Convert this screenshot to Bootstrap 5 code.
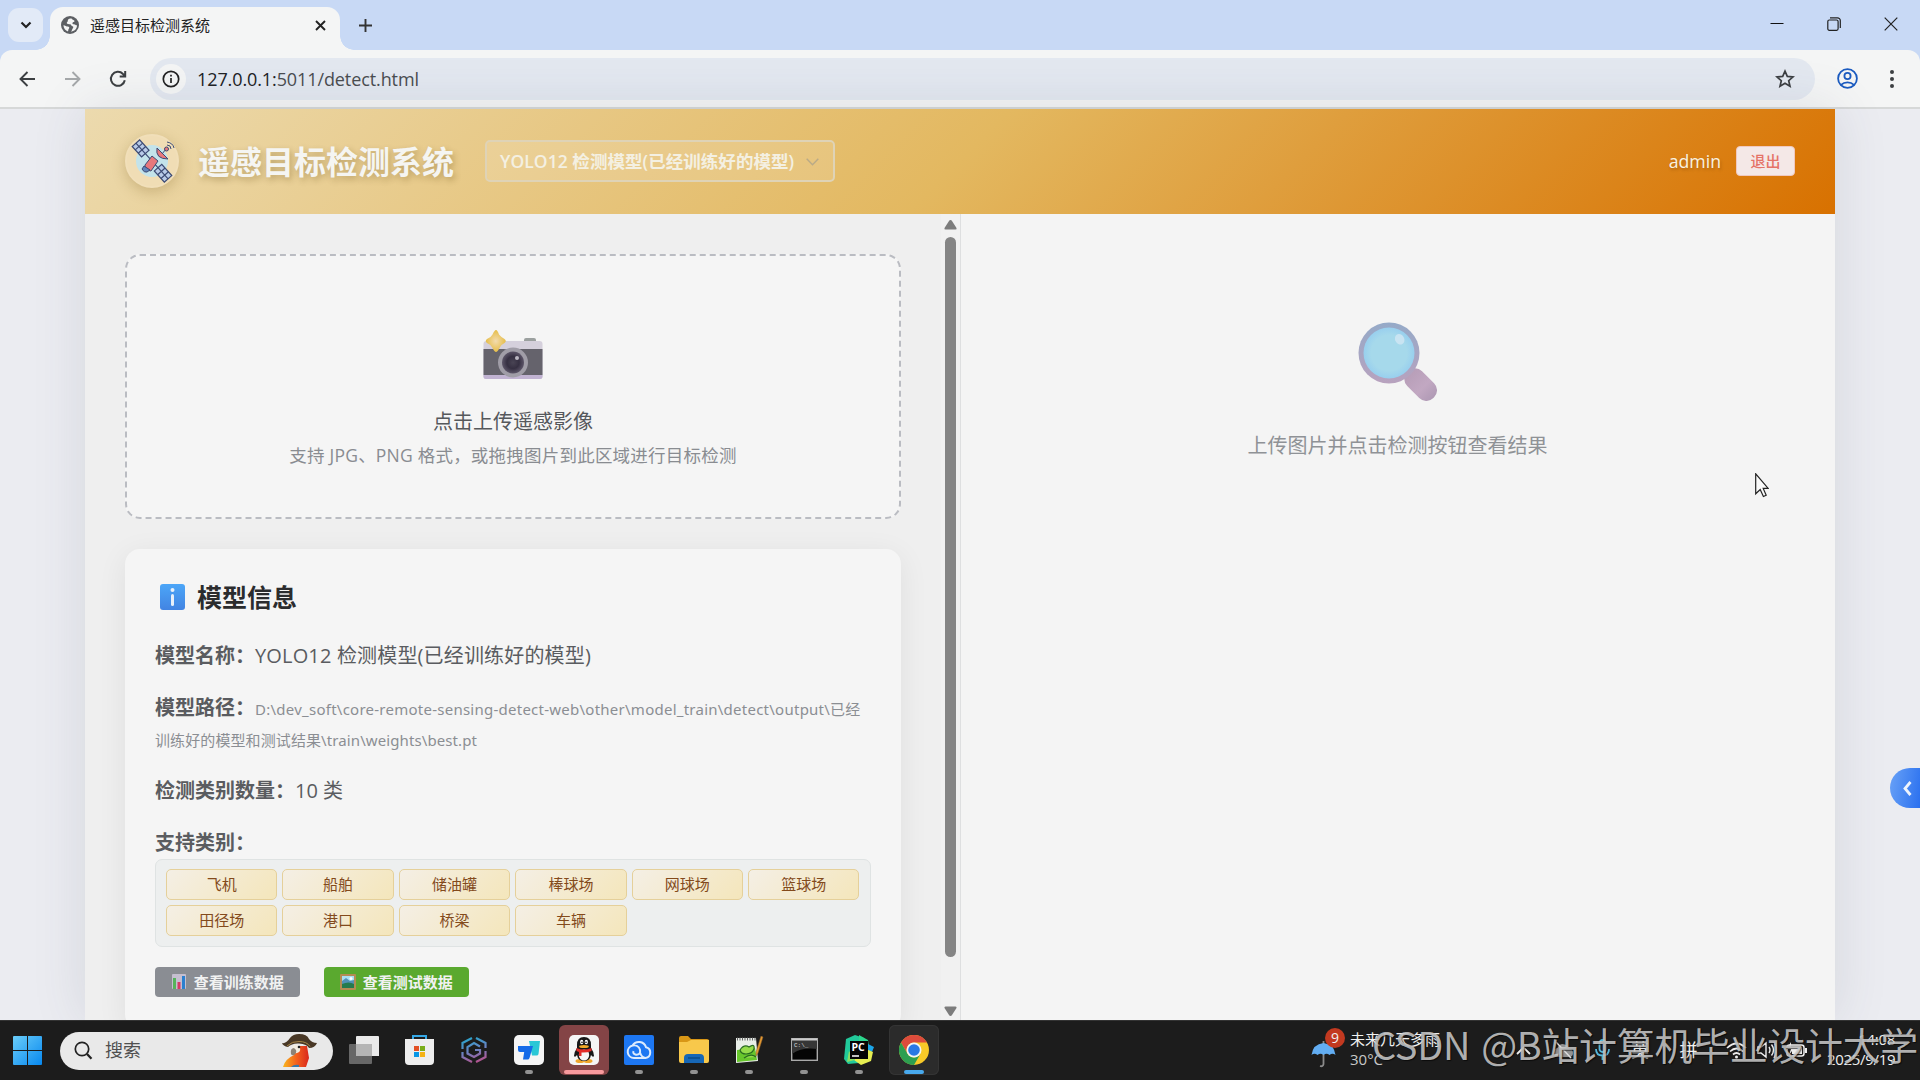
<!DOCTYPE html>
<html lang="zh-CN">
<head>
<meta charset="utf-8">
<title>遥感目标检测系统</title>
<link rel="stylesheet" href="https://cdn.jsdelivr.net/npm/bootstrap@5.3.0/dist/css/bootstrap.min.css">
<style>
body{width:1920px;height:1080px;overflow:hidden;font-family:"Open Sans","Noto Sans CJK SC",sans-serif;background:#ebecf1;color:#222}
svg{display:block;flex:none}
.tabstrip{height:50px;background:#c8d9f5;padding-left:8px}
.tabmenu{width:35px;height:34px;border-radius:11px;background:#e2eaf7;margin-top:8px}
.tabitem{width:290px;height:43px;margin:7px 0 0 7px;background:#f4f5f5;border-radius:13px 13px 0 0;padding:0 13px 0 11px;position:relative;font-size:15px}
.tabitem::before,.tabitem::after{content:"";position:absolute;bottom:0;width:14px;height:14px}
.tabitem::before{left:-14px;background:radial-gradient(circle at 0 0,transparent 13.5px,#f4f5f5 14px)}
.tabitem::after{right:-14px;background:radial-gradient(circle at 100% 0,transparent 13.5px,#f4f5f5 14px)}
.winbtns{gap:43px;padding-right:22px;margin-top:-1px}
.toolwrap{background:#c8d9f5}
.toolrow{height:59px;background:#f4f5f5;border-radius:12px 12px 0 0;border-bottom:2px solid #d6d8d8;padding:0 19px 0 18px}
.omni{height:42px;border-radius:21px;background:#e3e8f0;margin-left:24px;padding:0 20px 0 6px;font-size:18px;color:#4a4d50}
.omni b{font-weight:400;color:#202224}
.urltext{letter-spacing:-.1px;padding-top:2px}
.siteinfo{width:30px;height:30px;border-radius:50%;background:#f4f5f5;margin-right:11px}
.viewport{height:911px;position:relative}
.appbox{width:1750px;height:911px;box-shadow:0 0 50px rgba(60,70,90,.13)}
.apphead{height:105px;padding:0 40px;background:linear-gradient(135deg,#ecdaae 0%,#e3b860 50%,#d87100 100%)}
.applogo{width:54px;height:54px;border-radius:50%;border:2px solid #f1dfb9;background:#f0ddb5;box-shadow:0 4px 14px rgba(120,90,30,.28);margin:-1px 19px 0 0}
.apptitle{font-size:32px;font-weight:700;color:#f5f5f2;text-shadow:2px 3px 6px rgba(90,65,10,.32);line-height:1;margin-right:31px;white-space:nowrap}
.modelsel{width:350px;height:42px;border:2px solid #dfd3b6;border-radius:5px;background:rgba(255,255,255,.13);font-size:17.5px;font-weight:600;color:#f4f0e2;padding:1px 14px 0 13px;white-space:nowrap;margin-top:-1px;letter-spacing:.05px}
.uname{font-size:17.7px;color:#f8f2e2;text-shadow:1px 2px 3px rgba(80,40,0,.3);margin-right:15px}
.quit{width:59px;height:30px;border:1px solid #f0c9c0;border-radius:4px;background:#f4e8e7;color:#e57367;font-size:15px;font-weight:500;margin-top:-1px}
.leftpane{width:875px;height:806px;background:#efefef;padding:40px 0 0 40px;overflow:hidden}
.leftcol{width:776px}
.drop{height:265px;border:2px dashed #babcc2;border-radius:15px;background:#f5f5f5;padding-top:74px;margin-bottom:30px}
.drop-a{font-size:20px;line-height:30px;color:#55585c;margin-top:27px}
.drop-b{font-size:17.5px;line-height:28px;color:#898c91;margin-top:4px;white-space:nowrap;letter-spacing:.22px}
.infocard{height:480px;border-radius:15px;background:#f5f5f5;box-shadow:0 6px 30px rgba(0,0,0,.07);padding:28px 30px}
.infotitle{font-size:25px;font-weight:700;color:#2b2c2e;line-height:40px;padding-left:5px}
.inforow{font-size:20px;line-height:32px;height:32px;color:#5a5c60;white-space:nowrap;margin-bottom:20px}
.inforow strong{color:#5a5c60;font-weight:700}
.modelname{letter-spacing:.16px}
.inforow.tworow{height:63px}
.path{font-family:"Noto Sans","Noto Sans CJK SC",sans-serif;font-size:15px;color:#8b8e93;letter-spacing:.25px}
.path.second{display:block;line-height:32px;margin-top:-1px;letter-spacing:.1px}
.tagbox{height:88px;border:1px solid #dfe3e3;border-radius:7px;background:#edefef;padding:9px 10.5px 9px 10px;display:grid;grid-template-columns:repeat(6,1fr);gap:5px;grid-auto-rows:31px}
.tagitem{border:1px solid #e5d09a;border-radius:5px;background:linear-gradient(135deg,#f4efe5,#f4e6bb);color:#834a1c;font-size:15px}
.actbtn{width:144.5px;height:30px;border-radius:4px;font-size:15px;font-weight:700;color:#f1f2f2;white-space:nowrap;gap:7px}
.grayb{background:#8a8d93}.greenb{background:#5aa92f}
.sbar{width:19px;margin:-40px 0 0 0;height:806px;background:#f1f1f1;padding:6px 0 4px}
.sthumb{width:11px;height:720px;border-radius:6px;background:#858585}
.rightpane{width:875px;height:806px;background:#f4f4f4;border-left:1px solid #dedfe0;padding:108px 1px 0 0}
.emptytxt{font-size:20px;line-height:30px;color:#8f9296;margin-top:30px}
.edgebtn{position:absolute;right:0;top:659px;width:30px;height:40px;border-radius:20px 0 0 20px;padding-left:5px;background:linear-gradient(100deg,#69a2f7,#2a70ef)}
.mouse{position:absolute;left:1755px;top:364px}
.taskbar{height:60px;background:#1c1c1c;position:relative;border-top:1px solid #333;color:#f1f1f1}
.winlogo{width:55px;padding-left:13px}
.searchpill{width:273px;height:38px;border-radius:19px;background:#e9e9e9;color:#505050;font-size:18px;margin-left:5px;padding:0 15px 0 14px}
.slots{margin:-1px 0 0 6px}
.slot{width:50px;height:50px;border-radius:6px;margin-right:5px;position:relative;padding-bottom:1px}
.slot i{position:absolute;bottom:1px;left:21px;width:8px;height:4px;border-radius:2px;background:#929292}
.slot.qq{background:#844446}.slot.qq i{left:5px;width:40px;background:#f79a9d}
.slot.chr{background:#2b2b2b;box-shadow:inset 0 0 0 1px #343434}.slot.chr i{left:15px;width:20px;background:#48a9ed}
.tray{font-size:15px;line-height:20px;width:583px;margin:-4px 25px 0 0}
.weather{position:relative;width:38px;height:40px}
.wbadge{position:absolute;left:13px;top:-1px;width:20px;height:20px;border-radius:50%;background:#c23920;font-size:14px;line-height:20px;text-align:center}
.trayicons{gap:9.5px;margin:3px 19px 0 0}
.ime{font-size:18px;width:20px}
.wm{position:absolute;left:1372px;top:-7px;font-family:"Noto Sans CJK SC",sans-serif;font-size:38px;line-height:60px;color:rgba(205,205,205,.85);white-space:nowrap;text-shadow:1px 1px 1px rgba(0,0,0,.6);word-spacing:3px;letter-spacing:-.35px;font-weight:400}
</style>
<script src="https://cdn.jsdelivr.net/npm/bootstrap@5.3.0/dist/js/bootstrap.bundle.min.js"></script>
</head>
<body>
<header>
 <div class="tabstrip d-flex align-items-start">
  <div class="tabmenu d-flex align-items-center justify-content-center"><svg width="12" height="8" viewBox="0 0 12 8" fill="none" stroke="#222" stroke-width="2.2"><path d="M1.5 1.5 6 6l4.5-4.5"/></svg></div>
  <div class="tabitem d-flex align-items-center">
   <svg width="18" height="18" viewBox="0 0 18 18" style="margin-top:-7px"><circle cx="9" cy="9" r="9" fill="#5c5f63"/><path d="M10.500 2.500C8 2 6.500 3.500 6.800 5c.2 1-1.300 1-1 2.300.3 1.200 2 .7 3.400 1 1.500.4 1 2 2.300 2 1 .2 1 1.400.2 2.200-.8.700-.5 2-1.700 3.200 4-.7 6-3.200 6-6.400-1.200.3-1.700-1-3-1-1 0-1.800-.3-1.500-1.400.3-1 2-.6 2-1.900 0-1-2-1-3-2.500M2.400 9.200c.2 3 2 5.400 4.600 6.200.6-1 0-2 1-2.800.8-.8 0-2-1.200-2-1.400 0-2.600-1.200-4.400-1.400z" fill="#f4f5f5"/></svg>
   <span style="margin:-7px 0 0 11px">遥感目标检测系统</span>
   <svg class="ms-auto" width="13" height="13" viewBox="0 0 13 13" stroke="#222" stroke-width="1.900" style="margin-top:-7px"><path d="m2 2 9 9M11 2l-9 9"/></svg>
  </div>
  <svg width="15" height="15" viewBox="0 0 15 15" stroke="#333" stroke-width="1.900" style="margin:18px 0 0 18px"><path d="M7.500 1v13M1 7.500h13"/></svg>
  <div class="winbtns d-flex align-items-center ms-auto h-100">
   <svg width="14" height="14" viewBox="0 0 14 14"><path d="M.5 6.500h13" stroke="#111"/></svg>
   <svg width="14" height="14" viewBox="0 0 14 14" fill="none" stroke="#222" stroke-width="1.200"><rect x=".8" y="3" width="10.300" height="10.300" rx="1.500"/><path d="M3 .8h7.500a2.800 2.800 0 0 1 2.800 2.800V11"/></svg>
   <svg width="14" height="14" viewBox="0 0 14 14" stroke="#222" stroke-width="1.200"><path d="m.7.7 12.600 12.600M13.300.7.7 13.300"/></svg>
  </div>
 </div>
 <div class="toolwrap">
 <div class="toolrow d-flex align-items-center">
  <svg width="18" height="16" viewBox="0 0 18 16" fill="none" stroke="#3c3f42" stroke-width="1.900"><path d="M17 8H3M9.500 1 2.500 8l7 7"/></svg>
  <svg style="margin-left:28px" width="18" height="16" viewBox="0 0 18 16" fill="none" stroke="#a5a8aa" stroke-width="1.900"><path d="M1 8h14M8.500 1l7 7-7 7"/></svg>
  <svg style="margin-left:27px;margin-right:-1px" width="18" height="18" viewBox="0 0 18 18" fill="none" stroke="#3c3f42" stroke-width="2"><path d="M15.800 10.200A7 7 0 1 1 14 4l2 2M16.200 1v5.500h-5.500"/></svg>
  <div class="omni d-flex align-items-center flex-grow-1">
   <div class="siteinfo d-flex align-items-center justify-content-center"><svg width="18" height="18" viewBox="0 0 18 18" fill="none" stroke="#222" stroke-width="1.700"><circle cx="9" cy="9" r="7.700"/><path d="M9 8v5M9 4.800v1.800"/></svg></div>
   <span class="urltext"><b>127.0.0.1:</b>5011/detect.html</span>
   <svg class="ms-auto" width="20" height="20" viewBox="0 0 20 20" fill="none" stroke="#3c3f42" stroke-width="1.700"><path d="m10 2.200 2.300 5.200 5.700.5-4.300 3.800 1.300 5.600-5-3-5 3 1.300-5.600L2 7.900l5.700-.5z"/></svg>
  </div>
  <svg style="margin-left:22px" width="21" height="21" viewBox="0 0 21 21" fill="none" stroke="#1b5bc0" stroke-width="1.800"><circle cx="10.500" cy="10.500" r="9.400"/><circle cx="10.500" cy="8" r="3.100"/><path d="M4 16.800c3.500-3.300 9.500-3.300 13 0"/></svg>
  <svg style="margin:0 6px 0 31px" width="6" height="20" viewBox="0 0 6 20" fill="#3c3f42"><circle cx="3" cy="3" r="2"/><circle cx="3" cy="10" r="2"/><circle cx="3" cy="17" r="2"/></svg>
 </div></div>
</header>
<main class="viewport d-flex justify-content-center">
 <div class="appbox">
  <div class="apphead d-flex align-items-center">
   <div class="applogo d-flex align-items-center justify-content-center">
    <svg width="50" height="50" viewBox="0 0 50 50"><circle cx="25" cy="25" r="16" fill="#c3e3ea"/><g transform="rotate(-42 25 25)" stroke="#3d4b74" stroke-width="1.200"><path d="M25 8v35" /><rect x="20" y="1" width="10" height="14" fill="#b8cbe8"/><path d="M20 5.500h10M20 10h10M25 1v14"/><rect x="20" y="34" width="10" height="15" fill="#b8cbe8"/><path d="M20 39h10M20 44h10M25 34v15"/></g><path d="m18 29 7-9 6 5-7 10q-7-1-6-6z" fill="#e8787b" stroke="#3d4b74"/><path d="M30 12q-2 11 11 11z" fill="#e8787b" stroke="#3d4b74"/><path d="m35 18 4-5" stroke="#3d4b74"/><circle cx="39.500" cy="13" r="2" fill="#e8787b" stroke="#3d4b74"/><path d="M40 9q4 0 4 4M40 6q6 1 7 6" fill="none" stroke="#3d4b74"/><path d="m17 30-2 3q2 4 5 3l3-2z" fill="#6285ba" stroke="#3d4b74"/></svg>
   </div>
   <div class="apptitle">遥感目标检测系统</div>
   <div class="modelsel d-flex align-items-center justify-content-between"><span>YOLO12 检测模型(已经训练好的模型)</span><svg width="13" height="8" viewBox="0 0 13 8" fill="none" stroke="#b9aa88" stroke-width="1.400"><path d="m.7.8 5.800 6 5.800-6"/></svg></div>
   <div class="uname ms-auto">admin</div>
   <div class="quit d-flex align-items-center justify-content-center">退出</div>
  </div>
  <div class="d-flex">
   <section class="leftpane d-flex justify-content-between">
    <div class="leftcol">
     <div class="drop d-flex flex-column align-items-center">
      <svg width="60" height="50" viewBox="0 0 60 50"><defs><radialGradient id="lens"><stop offset="0" stop-color="#494454"/><stop offset=".55" stop-color="#363042"/><stop offset="1" stop-color="#5c5568"/></radialGradient><radialGradient id="spark"><stop offset="0" stop-color="#f3dcb0"/><stop offset="1" stop-color="#e6bd48"/></radialGradient></defs><rect x="41" y="8" width="12" height="5" rx="2" fill="#9ba09f"/><rect x=".5" y="11" width="59" height="38" rx="3" fill="#d5d0dc"/><path d="M.5 19h59v26H.5z" fill="#65636c"/><path d="M.5 45h59v1.500a2.500 2.500 0 0 1-2.500 2.500H3a2.500 2.500 0 0 1-2.500-2.500z" fill="#c1b3d2"/><circle cx="30" cy="32.500" r="15" fill="#a09da7"/><circle cx="30" cy="32.500" r="11" fill="url(#lens)"/><circle cx="34" cy="28" r="2" fill="#bbb7c2"/><path d="M13 0q1.500 0 3 4.500Q18 7 21.500 9q2.500 2 0 4-3.500 1.500-5 5-2 4-3.500 4t-3.500-4Q8 14.500 4 13q-2.500-2 0-4 4-1.500 5.500-4.500Q11.500 0 13 0" fill="url(#spark)"/></svg>
      <div class="drop-a">点击上传遥感影像</div>
      <div class="drop-b">支持 JPG、PNG 格式，或拖拽图片到此区域进行目标检测</div>
     </div>
     <div class="infocard">
      <div class="infotitle d-flex align-items-center"><svg width="25" height="26" viewBox="0 0 25 26"><defs><linearGradient id="ib" x2="0" y2="1"><stop stop-color="#4ca6f8"/><stop offset="1" stop-color="#4284e2"/></linearGradient></defs><rect width="25" height="26" rx="3" fill="url(#ib)"/><circle cx="12.500" cy="6" r="2" fill="#e8f0fa"/><rect x="11" y="10" width="3" height="12" rx="1.500" fill="#e8f0fa"/></svg><span style="margin-left:12px">模型信息</span></div>
      <div class="inforow" style="margin-top:23px"><strong>模型名称：</strong><span class="modelname">YOLO12 检测模型(已经训练好的模型)</span></div>
      <div class="inforow tworow"><strong>模型路径：</strong><span class="path">D:\dev_soft\core-remote-sensing-detect-web\other\model_train\detect\output\已经</span><span class="path second">训练好的模型和测试结果\train\weights\best.pt</span></div>
      <div class="inforow"><strong>检测类别数量：</strong>10 类</div>
      <div class="inforow mb-0"><strong>支持类别：</strong></div>
      <div class="tagbox">
       <div class="tagitem d-flex align-items-center justify-content-center">飞机</div><div class="tagitem d-flex align-items-center justify-content-center">船舶</div><div class="tagitem d-flex align-items-center justify-content-center">储油罐</div><div class="tagitem d-flex align-items-center justify-content-center">棒球场</div><div class="tagitem d-flex align-items-center justify-content-center">网球场</div><div class="tagitem d-flex align-items-center justify-content-center">篮球场</div><div class="tagitem d-flex align-items-center justify-content-center">田径场</div><div class="tagitem d-flex align-items-center justify-content-center">港口</div><div class="tagitem d-flex align-items-center justify-content-center">桥梁</div><div class="tagitem d-flex align-items-center justify-content-center">车辆</div>
      </div>
      <div class="d-flex" style="margin-top:20px;gap:24.500px">
       <div class="actbtn grayb d-flex align-items-center justify-content-center"><svg width="16" height="16" viewBox="0 0 16 16"><rect x="1" width="14" height="15" rx="1" fill="#c5bfd0"/><path d="M2 4h3v11H2z" fill="#55b45b"/><path d="M6.500 8h3v7h-3z" fill="#d63a66"/><path d="M11 2h3v13h-3z" fill="#2b80cf"/></svg>查看训练数据</div>
       <div class="actbtn greenb d-flex align-items-center justify-content-center"><svg width="16" height="16" viewBox="0 0 16 16"><rect width="16" height="16" rx="1" fill="#b48b53"/><path d="M2 2h12v12H2z" fill="#a8dff2"/><path d="m2 7 4-3 4 3 4-1v8H2z" fill="#5292b8"/><path d="M2 10q7-3 12 0v4H2z" fill="#247b4e"/><circle cx="11" cy="4.500" r="1.500" fill="#fff"/></svg>查看测试数据</div>
      </div>
     </div>
    </div>
    <div class="sbar d-flex flex-column align-items-center">
     <svg width="13" height="10" viewBox="0 0 13 10"><path d="M6.500 0q1 0 1.500 1l4.500 7q.5 1.500-1 1.500h-10Q0 9.500.5 8L5 1q.5-1 1.500-1" fill="#7c7c7c"/></svg>
     <div class="sthumb" style="margin-top:7px"></div>
     <svg class="mt-auto" width="13" height="10" viewBox="0 0 13 10"><path d="M6.500 10q-1 0-1.500-1L.5 2Q0 .5 1.500.5h10q1.500 0 1 1.500L8 9q-.5 1-1.500 1" fill="#7c7c7c"/></svg>
    </div>
   </section>
   <section class="rightpane d-flex flex-column align-items-center">
    <svg width="79" height="79" viewBox="0 0 79 79"><defs><linearGradient id="rim" x2="0" y2="1"><stop stop-color="#95aac8"/><stop offset="1" stop-color="#b8a2be"/></linearGradient><radialGradient id="gl"><stop offset=".7" stop-color="#a6d9eb"/><stop offset="1" stop-color="#98cfee"/></radialGradient><linearGradient id="hd"><stop stop-color="#b69db7"/><stop offset=".6" stop-color="#c2a8c2"/><stop offset="1" stop-color="#b09ab5"/></linearGradient></defs><rect x="44" y="52.500" width="37" height="21" rx="10" transform="rotate(45 63 63)" fill="url(#hd)"/><circle cx="31" cy="31" r="30.500" fill="url(#rim)"/><circle cx="31" cy="31" r="25.500" fill="url(#gl)"/><ellipse cx="41.500" cy="17.500" rx="4.500" ry="5.500" fill="#c9e4f2" transform="rotate(-30 41 17)"/></svg>
    <div class="emptytxt">上传图片并点击检测按钮查看结果</div>
   </section>
  </div>
 </div>
 <div class="edgebtn d-flex align-items-center justify-content-center"><svg width="9" height="15" viewBox="0 0 9 15" fill="none" stroke="#eef4fc" stroke-width="2.800"><path d="M7.500 1 2 7.500 7.500 14"/></svg></div>
 <svg class="mouse" width="14" height="25" viewBox="0 0 14 25"><path d="M.7.8v20l4.500-4.300 3.200 7 2.800-1.300-3-6.800h5z" fill="#fafafa" stroke="#222" stroke-width="1.200"/></svg>
</main>
<footer class="taskbar d-flex align-items-center">
 <div class="winlogo"><svg width="29" height="29" viewBox="0 0 29 29"><defs><linearGradient id="wl" x2="1" y2="1"><stop stop-color="#6acdf9"/><stop offset="1" stop-color="#0788ef"/></linearGradient></defs><path d="M0 1q0-1 1-1h13v14H0zM15 0h13q1 0 1 1v13H15zM0 15h14v14H1q-1 0-1-1zM15 15h14v13q0 1-1 1H15z" fill="url(#wl)"/></svg></div>
 <div class="searchpill d-flex align-items-center">
  <svg width="19" height="19" viewBox="0 0 19 19" fill="none" stroke="#222"><circle cx="8" cy="8" r="6.700" stroke-width="1.700"/><path d="m13 13 4.500 4.800" stroke-width="2.300"/></svg><span style="margin-left:12px">搜索</span>
  <svg class="ms-auto" width="36" height="34" viewBox="0 0 36 34"><defs><linearGradient id="pb"><stop stop-color="#f8b61d"/><stop offset=".5" stop-color="#f4631d"/><stop offset="1" stop-color="#d9261b"/></linearGradient></defs><path d="M1 33q2-8 11-12l1-9h12l2 12-3 9z" fill="url(#pb)"/><path d="M9 33q3-3 8-2v2z" fill="#3977a8"/><path d="M11 11q6-1 7 3t-3 5-5-4z" fill="#f3ede0"/><path d="M12 14q-4 0-3 6 1 2 3 1 3-2 2-5z" fill="#8d8377"/><circle cx="17" cy="13" r="1.300" fill="#222"/><path d="M0 9q4 1 8-5 3-4 9-4 8 0 10 5 3 4 8 4-2 5-8 5-2-4-10-4.500-7-.5-11 3.500-5-1-6-4" fill="#493826"/><path d="M5 12q5-5 12-4.500 8 0 11 5" fill="none" stroke="#a78648"/></svg>
 </div>
 <div class="slots d-flex align-items-center">
  <div class="slot d-flex align-items-center justify-content-center"><svg width="30" height="28" viewBox="0 0 30 28"><path d="M7 1q0-1 1-1h21q1 0 1 1v19H7z" fill="#eaeaea"/><rect y="8" width="23" height="20" rx="1" fill="#777" opacity=".82"/><path d="M7 8h16v12H7z" fill="#b5b5b5"/></svg></div>
  <div class="slot d-flex align-items-center justify-content-center"><svg width="29" height="30" viewBox="0 0 29 30"><path d="M8 6V1h13v5" fill="none" stroke="#35a8e6" stroke-width="2"/><path d="M0 4h29v22q0 4-4 4H4q-4 0-4-4z" fill="#ededed"/><path d="M9 11h5v5H9z" fill="#e35025"/><path d="M15 11h5v5h-5z" fill="#79ad19"/><path d="M9 17h5v5H9z" fill="#0796e6"/><path d="M15 17h5v5h-5z" fill="#f5b214"/></svg></div>
  <div class="slot d-flex align-items-center justify-content-center"><svg width="26" height="28" viewBox="0 0 26 28" fill="none" stroke="url(#gg)" stroke-width="2.200"><defs><linearGradient id="gg" gradientUnits="userSpaceOnUse" x1="8" x2="16" y1="0" y2="28"><stop stop-color="#22a7cc"/><stop offset=".5" stop-color="#6884c4"/><stop offset="1" stop-color="#bd4c87"/></linearGradient></defs><path d="M11 2 1.500 7v6M15 2l9.500 5v5M1.500 16v5l9.500 5M24.500 15v6L15 26M19 10.500 13 7l-6.500 4v6.500L13 21l6-3.500V14h-5"/></svg></div>
  <div class="slot d-flex align-items-center justify-content-center"><svg width="30" height="30" viewBox="0 0 30 30"><rect width="30" height="30" rx="5" fill="#f5f5f5"/><path d="M15 6h11l-1.500 13q-.2 1.500-2 1.500H18z" fill="#29c7d6"/><path d="M4 11h15l-3.500 12q-.5 1.500-2 1.500H9l1.200-7.500H6q-2 0-2-2z" fill="#156be8"/></svg><i></i></div>
  <div class="slot qq d-flex align-items-center justify-content-center"><svg width="30" height="30" viewBox="0 0 30 30"><rect width="30" height="30" rx="5" fill="#f5f5f5"/><ellipse cx="11" cy="26" rx="4.500" ry="2" fill="#efa62c"/><ellipse cx="19" cy="26" rx="4.500" ry="2" fill="#efa62c"/><path d="M8 10q0-8 7-8t7 8v3q3 4 3 8-1 2-3-1-1 6-7 6t-7-6q-2 3-3 1 0-4 3-8z" fill="#171717"/><ellipse cx="15" cy="20" rx="5.200" ry="5.500" fill="#f5f5f5"/><path d="M7.500 13q7 3 15 0v3q-5 2-10 1.500V21H10v-4l-2.500-1z" fill="#e22c28"/><ellipse cx="12.700" cy="7" rx="1.600" ry="2.300" fill="#fff"/><ellipse cx="17.300" cy="7" rx="1.600" ry="2.300" fill="#fff"/><circle cx="13" cy="7.300" r=".8"/><circle cx="17" cy="7.300" r=".8"/><ellipse cx="15" cy="11.500" rx="4.800" ry="1.500" fill="#f0aa28"/></svg><i></i></div>
  <div class="slot d-flex align-items-center justify-content-center"><svg width="30" height="30" viewBox="0 0 30 30"><rect width="30" height="30" rx="2" fill="#1d77f2"/><path d="M8.500 10.500A7.500 7.500 0 0 1 22 12.200a5.500 5.500 0 0 1-.5 10.800H10a6.300 6.300 0 1 1 6-8.300M16 14.700q1 5.300-4 5-3.500-.8-2.500-3.500M16 17.500q1.500 5 5.500 5.500" fill="none" stroke="#dcebfd" stroke-width="2"/></svg><i></i></div>
  <div class="slot d-flex align-items-center justify-content-center"><svg width="30" height="27" viewBox="0 0 30 27"><path d="M0 2q0-2 2-2h7l3 3h16q2 0 2 2v4H0z" fill="#d99716"/><path d="M0 6h8l4-2h18v21q0 2-2 2H2q-2 0-2-2z" fill="#f8c84b"/><path d="M5 27v-5q0-4 4-4h12q4 0 4 4v5z" fill="#1767b6"/><path d="M9 22h12" stroke="#0b4b88" stroke-width="1.500"/></svg><i></i></div>
  <div class="slot d-flex align-items-center justify-content-center"><svg width="29" height="28" viewBox="0 0 29 28"><path d="M1 2h20l2 23-22 2z" fill="#e9eee8"/><path d="M2 3h19" stroke="#666" stroke-width="3" stroke-dasharray="1 1.500"/><path d="m2 14 18-2 2 12-20 2z" fill="#67c72c"/><path d="M5 14q4-6 9-3 6-4 5 2-2 5-8 5-5 0-6-4m4 8q7-5 12-1" fill="#95dc4b" stroke="#286b20" stroke-width="1.200"/><path d="m28 1-5 16-2 3v-4L26 0z" fill="#e49933" stroke="#865c28" stroke-width=".5"/></svg><i></i></div>
  <div class="slot d-flex align-items-center justify-content-center"><svg width="27" height="23" viewBox="0 0 27 23"><rect x=".7" y=".7" width="25.600" height="21.600" fill="#050505" stroke="#aaa" stroke-width="1.400"/><path d="M1 1h25v10Q11 9 1 16z" fill="#363636"/><path d="M1 1.500h25" stroke="#ccc" stroke-width="2"/><text x="3" y="9" font-family="Liberation Mono" font-size="6" fill="#ddd">C:\_</text></svg><i></i></div>
  <div class="slot d-flex align-items-center justify-content-center"><svg width="30" height="30" viewBox="0 0 30 30"><path d="m2 4 9-4 9 3 4 8-9 17-11 1-4-5z" fill="#21c99a"/><path d="m15 0 9 5 1 8-10-2z" fill="#2cd68c"/><path d="m24 9 6 3-2 5-5-2z" fill="#1ba5e8"/><path d="m22 14 7 3-2 9-10 4-7-5z" fill="#e6ee51"/><path d="m5 16 6 9-8 2z" fill="#8ade64"/><path d="M6 6h18v18H6z" fill="#050505"/><text x="7.500" y="15.500" font-family="Open Sans" font-size="10.500" font-weight="700" fill="#fff">PC</text><path d="M8 21h7" stroke="#fff" stroke-width="1.500"/></svg><i></i></div>
  <div class="slot chr d-flex align-items-center justify-content-center"><svg width="30" height="30" viewBox="0 0 30 30"><circle cx="15" cy="15" r="15" fill="#f7c928"/><path d="M2 7.500A15 15 0 0 1 28 7.500H15A7.500 7.500 0 0 0 8.500 18.700z" fill="#dd4b3c"/><path d="M2 7.500A15 15 0 0 0 15 30l6.500-11.300A7.500 7.500 0 0 1 8.500 18.700z" fill="#2d9f50"/><circle cx="15" cy="15" r="7.500" fill="#f4f5f5"/><circle cx="15" cy="15" r="5.800" fill="#2a78e4"/></svg><i></i></div>
 </div>
 <div class="tray d-flex align-items-center ms-auto">
  <div class="weather"><svg width="25" height="29" viewBox="0 0 25 29" style="position:relative;top:11px;left:-1px"><path d="M12.500 1v3M12.500 13v11q-.5 3-3.500 2" fill="none" stroke="#8a8a8a" stroke-width="1.800"/><path d="M.5 15Q2 4 12.500 3 23 4 24.500 15q-3-2.500-6 0-3-2.500-6 0-3-2.500-6 0-3-2.500-6 0" fill="#62adf2"/></svg><span class="wbadge">9</span></div>
  <div class="text-nowrap">未来几天多雨<br><span style="color:#c8c8c8">30°C</span></div>
  <div class="trayicons d-flex align-items-center ms-auto">
   <svg width="15" height="9" viewBox="0 0 15 9" fill="none" stroke="#eee" stroke-width="1.800" style="margin-right:13px"><path d="m1 8 6.500-6.500L14 8"/></svg>
   <svg width="20" height="18" viewBox="0 0 20 18" style="margin-right:12px"><path d="M5 16a4.500 4.500 0 0 1-.5-9A6 6 0 0 1 16 8a4 4 0 0 1 0 8z" fill="#929292"/><path d="m3 1 15 16" stroke="#ddd" stroke-width="1.500"/></svg>
   <svg width="15" height="22" viewBox="0 0 15 22" fill="none" stroke="#55b6db" stroke-width="1.800" style="margin-right:12px"><rect x="4.500" y="1" width="6" height="12" rx="3"/><path d="M1 10q0 6.500 6.500 6.500T14 10M7.500 17v4"/></svg>
   <span class="ime" style="margin-right:19px">英</span><span class="ime" style="margin-right:17px">拼</span>
   <svg width="21" height="17" viewBox="0 0 21 17" fill="none" stroke="#eee" stroke-width="1.700"><path d="M1 6q9.500-9 19 0M4 9.500q6.500-6 13 0M7 12.500q3.500-3 7 0"/><circle cx="10.500" cy="15" r="1.500" fill="#eee" stroke="none"/></svg>
   <svg width="20" height="18" viewBox="0 0 20 18" fill="none" stroke="#eee" stroke-width="1.400"><path d="M1 6h3l5-4v14l-5-4H1zM12 6q2 3 0 6M14.500 3.500q4 5.500 0 11M17 1q5 8 0 16"/></svg>
   <svg width="22" height="16" viewBox="0 0 22 16"><rect x="1" y="3" width="17" height="11" rx="2.500" fill="none" stroke="#eee" stroke-width="1.500"/><rect x="6" y="5" width="10" height="7" fill="#eee"/><path d="M20 6v5" stroke="#eee" stroke-width="2"/><path d="M5 0 1 7h4l-2 6 6-8H5z" fill="#eee"/></svg>
  </div>
  <div class="text-end text-nowrap" style="width:68px"><span style="letter-spacing:-.3px">14:08</span><br><span style="letter-spacing:-.3px">2025/9/19</span></div>
 </div>
 <div class="wm">CSDN @B站计算机毕业设计大学</div>
</footer>
</body>
</html>
